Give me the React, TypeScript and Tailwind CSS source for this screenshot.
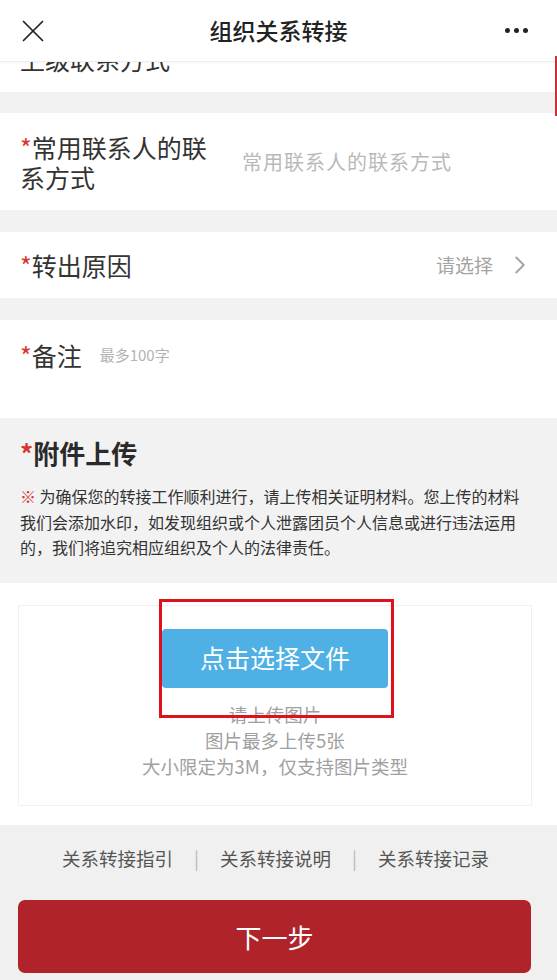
import { ChevronRight, X } from "lucide-react";

const font = { fontFamily: '"Noto Sans CJK SC", "Noto Sans", sans-serif' };

function Star() {
  return <span className="text-[#d9362f]">*</span>;
}

function Header() {
  return (
    <header className="relative z-10 flex h-[62px] items-center justify-between border-b border-[#eeeeee] bg-white px-[21px] shadow-[0_1px_3px_rgba(0,0,0,0.04)]">
      <X size={38} strokeWidth={1.1} className="-ml-[7px] text-[#222]" />
      <h1 className="text-[23px] font-medium text-[#222]">组织关系转接</h1>
      <div className="flex items-center gap-[4px] pr-[8px]">
        <span className="h-[5px] w-[5px] rounded-full bg-[#222]" />
        <span className="h-[5px] w-[5px] rounded-full bg-[#222]" />
        <span className="h-[5px] w-[5px] rounded-full bg-[#222]" />
      </div>
    </header>
  );
}

function App() {
  return (
    <div style={font} className="relative min-h-[980px] w-full bg-[#f2f2f2] text-[#333]">
      <Header />
      {/* partly scrolled away row */}
      <div className="h-[30px] overflow-hidden bg-white px-[20px]">
        <p className="-mt-[18px] text-[25px] leading-[30px]">上级联系方式</p>
      </div>
      <div className="h-[21px]" />

      <div className="flex h-[97px] items-center bg-white pl-[20px] pr-[24px]">
        <p className="w-[200px] text-[25px] leading-[30px]">
          <Star />
          常用联系人的联系方式
        </p>
        <p className="ml-[22px] text-[20px] tracking-[1px] text-[#b9b9b9]">常用联系人的联系方式</p>
      </div>
      <div className="h-[22px]" />

      <div className="flex h-[66px] items-center justify-between bg-white pl-[20px] pr-[22px]">
        <p className="text-[25px] leading-[30px]">
          <Star />
          转出原因
        </p>
        <div className="flex items-center gap-[12px] text-[#a3a3a3]">
          <span className="text-[19px]">请选择</span>
          <ChevronRight size={30} strokeWidth={1.5} />
        </div>
      </div>
      <div className="h-[22px]" />

      <div className="h-[98px] bg-white pl-[20px] pt-[20px]">
        <div className="flex items-center">
          <p className="text-[25px] leading-[30px]">
            <Star />
            备注
          </p>
          <span className="ml-[18px] text-[15px] text-[#b3b3b3]">最多100字</span>
        </div>
      </div>

      <section className="pb-[22px] pl-[20px] pr-[27px] pt-[18px]">
        <h2 className="text-[26px] font-bold leading-[34px] text-[#2a2a2a]">
          <Star />
          附件上传
        </h2>
        <p className="mt-[14px] text-[16px] leading-[25.5px] text-[#333]">
          <span className="text-[#d9362f]">※</span> 为确保您的转接工作顺利进行，请上传相关证明材料。您上传的材料我们会添加水印，如发现组织或个人泄露团员个人信息或进行违法运用的，我们将追究相应组织及个人的法律责任。
        </p>
      </section>

      <div className="bg-white pb-[19px] pt-[22px]">
        <div className="ml-[18px] mr-[25px] flex flex-col items-center border border-[#f1f1f1] pb-[26px] pt-[23px]">
          <div className="relative">
            <button className="h-[59px] w-[226px] rounded-[4px] bg-[#4fb0e5] text-[25px] text-white">
              点击选择文件
            </button>
            <div className="pointer-events-none absolute -left-[3px] -top-[30px] h-[119px] w-[235px] border-[3px] border-[#e0111b]" />
          </div>
          <div className="mt-[13px] text-center text-[18.5px] leading-[26px] text-[#a0a0a0]">
            <p>请上传图片</p>
            <p>图片最多上传5张</p>
            <p>大小限定为3M，仅支持图片类型</p>
          </div>
        </div>
      </div>

      <footer className="bg-[#f0f0f0] px-[18px] pb-[7px] pt-[20px]">
        <nav className="flex items-center justify-center pr-[6px] text-[18.5px] leading-[26px] text-[#555]">
          <span>关系转接指引</span>
          <span className="mx-[21px] text-[#bbb]">|</span>
          <span>关系转接说明</span>
          <span className="mx-[21px] text-[#bbb]">|</span>
          <span>关系转接记录</span>
        </nav>
        <button className="mt-[29px] h-[73px] w-[513px] rounded-[7px] bg-[#b0232b] text-[26px] text-white">
          下一步
        </button>
      </footer>

      <div className="absolute right-0 top-[56px] z-20 h-[60px] w-[2px] bg-[#c8333a]" />
    </div>
  );
}

export default App;
